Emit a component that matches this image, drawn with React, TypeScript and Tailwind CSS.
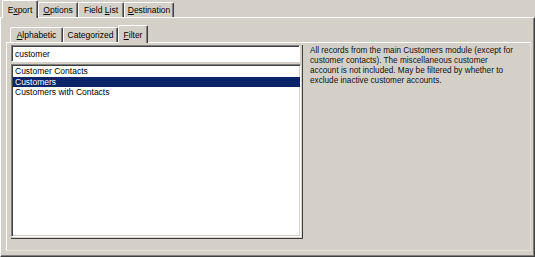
import React from "react";

const outerTabs = [
  { label: "Export", key: 1, active: true },
  { label: "Options", key: 0, active: false },
  { label: "Field List", key: 6, active: false },
  { label: "Destination", key: 0, active: false },
];

const innerTabs = [
  { label: "Alphabetic", key: 0, active: false },
  { label: "Categorized", key: -1, active: false },
  { label: "Filter", key: 0, active: true },
];

const rows = ["Customer Contacts", "Customers", "Customers with Contacts"];

// underline the accelerator letter like a classic Windows tab caption
const Caption = ({ label, idx }: { label: string; idx: number }) => {
  if (idx < 0) return <>{label}</>;
  return (
    <>
      {label.slice(0, idx)}
      <span className="underline underline-offset-[1px]">{label[idx]}</span>
      {label.slice(idx + 1)}
    </>
  );
};

const Tab = ({
  label,
  idx,
  active,
  width,
}: {
  label: string;
  idx: number;
  active: boolean;
  width: string;
}) => (
  <div
    className={
      active
        ? `relative z-10 -mb-px flex h-[18px] items-center justify-center rounded-t-[2px] border-l border-t border-white bg-[#d4d0c8] shadow-[inset_-1px_0_0_#808080] border-r border-r-[#404040] ${width}`
        : `flex h-[15px] items-center justify-center rounded-t-[2px] border-l border-t border-white bg-[#d4d0c8] shadow-[inset_-1px_0_0_#808080] border-r border-r-[#404040] ${width}`
    }
  >
    <span className="whitespace-nowrap text-black">
      <Caption label={label} idx={idx} />
    </span>
  </div>
);

const App = () => {
  const outerWidths = ["w-[36px]", "w-[40px]", "w-[46px]", "w-[50px]"];
  const innerWidths = ["w-[53px]", "w-[55px]", "w-[30px]"];

  return (
    <div className="h-[257px] w-[535px] overflow-hidden bg-[#d4d0c8] font-['Liberation_Sans',Arial,sans-serif] text-[8.5px] leading-[10px] text-black">
      {/* Outer tab strip */}
      <div className="flex h-[17px] items-end pl-[2px]">
        {outerTabs.map((t, i) => (
          <Tab key={t.label} label={t.label} idx={t.key} active={t.active} width={outerWidths[i]} />
        ))}
      </div>

      {/* Outer panel */}
      <div className="h-[240px] border-l border-t border-white border-r border-b border-r-[#404040] border-b-[#404040] pl-[5px] pr-[3px] pt-[7px] shadow-[inset_-1px_-1px_0_#808080]">
        {/* Inner tab strip */}
        <div className="flex h-[17px] items-end pl-[4px]">
          {innerTabs.map((t, i) => (
            <Tab key={t.label} label={t.label} idx={t.key} active={t.active} width={innerWidths[i]} />
          ))}
        </div>

        {/* Inner panel */}
        <div className="flex h-[209px] border-l border-t border-white border-r border-b border-r-[#e4e2dc] border-b-[#e4e2dc] pl-[4px] pt-[2px]">
          {/* Search + list */}
          <div className="flex h-[194px] w-[292px] flex-col gap-[2px] border-r border-b border-r-[#404040] border-b-[#404040]">
            <div className="flex h-[17px] w-[289px] items-center border-l border-t border-[#808080] border-r border-b border-r-white border-b-white bg-white pl-[3px] shadow-[inset_1px_1px_0_#404040]">
              customer
            </div>
            <div className="h-[173px] w-[290px] border-l border-t border-[#808080] border-r border-b border-r-white border-b-white bg-white pt-[1px] pl-px shadow-[inset_1px_1px_0_#404040,inset_-1px_-1px_0_#d4d0c8]">
              {rows.map((r) => (
                <div
                  key={r}
                  className={
                    r === "Customers"
                      ? "flex h-[10.5px] items-center bg-[#0a246a] pl-[2px] text-white"
                      : "flex h-[10.5px] items-center pl-[2px]"
                  }
                >
                  {r}
                </div>
              ))}
            </div>
          </div>

          {/* Description */}
          <p className="ml-[7px] whitespace-nowrap pt-px text-[8.2px] leading-[10px] text-[#111]">
            All records from the main Customers module (except for
            <br />
            customer contacts). The miscellaneous customer
            <br />
            account is not included. May be filtered by whether to
            <br />
            exclude inactive customer accounts.
          </p>
        </div>
      </div>
    </div>
  );
};

export default App;
